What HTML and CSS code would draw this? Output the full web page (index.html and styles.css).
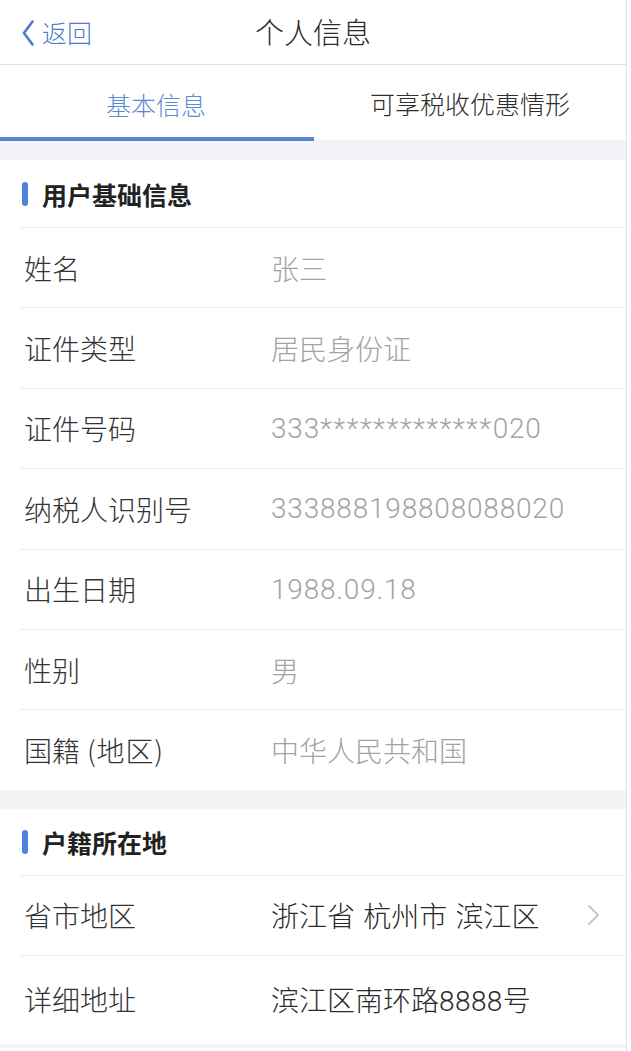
FILE: index.html
```html
<!DOCTYPE html>
<html lang="zh-CN">
<head>
<meta charset="utf-8">
<title>个人信息</title>
<link rel="stylesheet" href="styles.css">
</head>
<body>
<div class="page">
  <header class="navbar">
    <a class="back">
      <svg class="back-icon" viewBox="0 0 12 26" width="12" height="26"><path d="M10.5 1.5 L2 13 L10.5 24.5" fill="none" stroke="currentColor" stroke-width="2.6" stroke-linecap="round" stroke-linejoin="round"/></svg>
      <span>返回</span>
    </a>
    <h1 class="title">个人信息</h1>
    <span></span>
  </header>

  <nav class="tabs">
    <div class="tab active">基本信息</div>
    <div class="tab">可享税收优惠情形</div>
  </nav>

  <div class="band"></div>

  <section class="section">
    <div class="section-title"><i class="bar"></i>用户基础信息</div>
    <div class="list">
      <div class="row"><span class="label">姓名</span><span class="value">张三</span></div>
      <div class="row"><span class="label">证件类型</span><span class="value">居民身份证</span></div>
      <div class="row"><span class="label">证件号码</span><span class="value num">333<span class="stars">*************</span>020</span></div>
      <div class="row"><span class="label">纳税人识别号</span><span class="value num">333888198808088020</span></div>
      <div class="row"><span class="label">出生日期</span><span class="value num">1988.09.18</span></div>
      <div class="row"><span class="label">性别</span><span class="value">男</span></div>
      <div class="row"><span class="label">国籍<span class="paren"> (地区)</span></span><span class="value">中华人民共和国</span></div>
    </div>
  </section>

  <div class="band"></div>

  <section class="section">
    <div class="section-title second"><i class="bar"></i>户籍所在地</div>
    <div class="list">
      <div class="row"><span class="label">省市地区</span><span class="value dark spaced">浙江省 杭州市 滨江区</span>
        <svg class="chev" viewBox="0 0 13 22" width="13" height="22"><path d="M2 2 L11 11 L2 20" fill="none" stroke="currentColor" stroke-width="1.8" stroke-linecap="round" stroke-linejoin="round"/></svg>
      </div>
      <div class="row last"><span class="label">详细地址</span><span class="value dark">滨江区南环路<span class="digits">8888</span>号</span></div>
    </div>
  </section>
  <div class="band bottom"></div>
</div>
</body>
</html>
```

FILE: styles.css
```css
html, body {
  margin: 0;
  padding: 0;
  background: #ffffff;
}

body {
  font-family: "Noto Sans CJK SC", "Noto Sans", sans-serif;
  color: #333333;
}

.page {
  width: 626px;
  border-right: 1px solid #e2e2e2;
  min-height: 1051px;
  background: #ffffff;
}

.navbar {
  height: 64px;
  border-bottom: 1px solid #e3e3e6;
  display: grid;
  grid-template-columns: 1fr auto 1fr;
  align-items: center;
}

.back {
  display: flex;
  align-items: center;
  padding-left: 22px;
  color: #4f7cc8;
  font-size: 25px;
  font-weight: 300;
  line-height: 1;
}

.back-icon {
  margin-right: 8px;
  margin-top: 1px;
}

.title {
  margin: 0;
  font-size: 29px;
  font-weight: 300;
  color: #2b2b2b;
  line-height: 1;
  margin-top: -2px;
}

.tabs {
  display: flex;
  height: 76px;
}

.tab {
  flex: 1;
  display: flex;
  align-items: center;
  justify-content: center;
  font-size: 25px;
  font-weight: 300;
  color: #2e2e2e;
  box-sizing: border-box;
  padding-top: 1px;
}

.tab.active {
  color: #5b8ad4;
  border-bottom: 4px solid #5a85d3;
  padding-top: 5px;
  padding-right: 2px;
}

.tab:not(.active) {
  border-bottom: 1px solid #eef0f3;
}

.band {
  height: 19px;
  background: #f3f4f7;
}

.band.bottom {
  height: 4px;
}

.section-title {
  height: 67px;
  display: flex;
  align-items: center;
  padding-left: 22px;
  font-size: 25px;
  font-weight: 700;
  color: #222222;
}

.section-title.second {
  height: 66px;
}

.bar {
  display: block;
  width: 6px;
  height: 24px;
  border-radius: 3px;
  background: #4f82dc;
  margin-right: 14px;
}

.list {
  margin-left: 20px;
}

.row {
  height: 79.4px;
  border-top: 1px solid #ececee;
  display: flex;
  align-items: center;
  font-size: 28px;
  font-weight: 300;
}

.row.last {
  height: 89px;
  padding-bottom: 2px;
  box-sizing: border-box;
}

.label {
  width: 247px;
  padding-left: 4px;
  color: #333333;
  flex: none;
}

.paren {
  letter-spacing: 0.8px;
}

.value {
  color: #a3a3a3;
}

.value.num {
  font-family: Roboto, "Noto Sans CJK SC", sans-serif;
  font-weight: 300;
  letter-spacing: 0.8px;
}

.stars {
  letter-spacing: 1.4px;
}

.digits {
  font-family: Roboto, "Noto Sans CJK SC", sans-serif;
  font-weight: 300;
  letter-spacing: 0.4px;
}

.value.spaced {
  word-spacing: 2px;
}

.value.dark {
  color: #2a2a2a;
}

.chev {
  margin-left: auto;
  margin-right: 26px;
  color: #c6c6c6;
}
```
